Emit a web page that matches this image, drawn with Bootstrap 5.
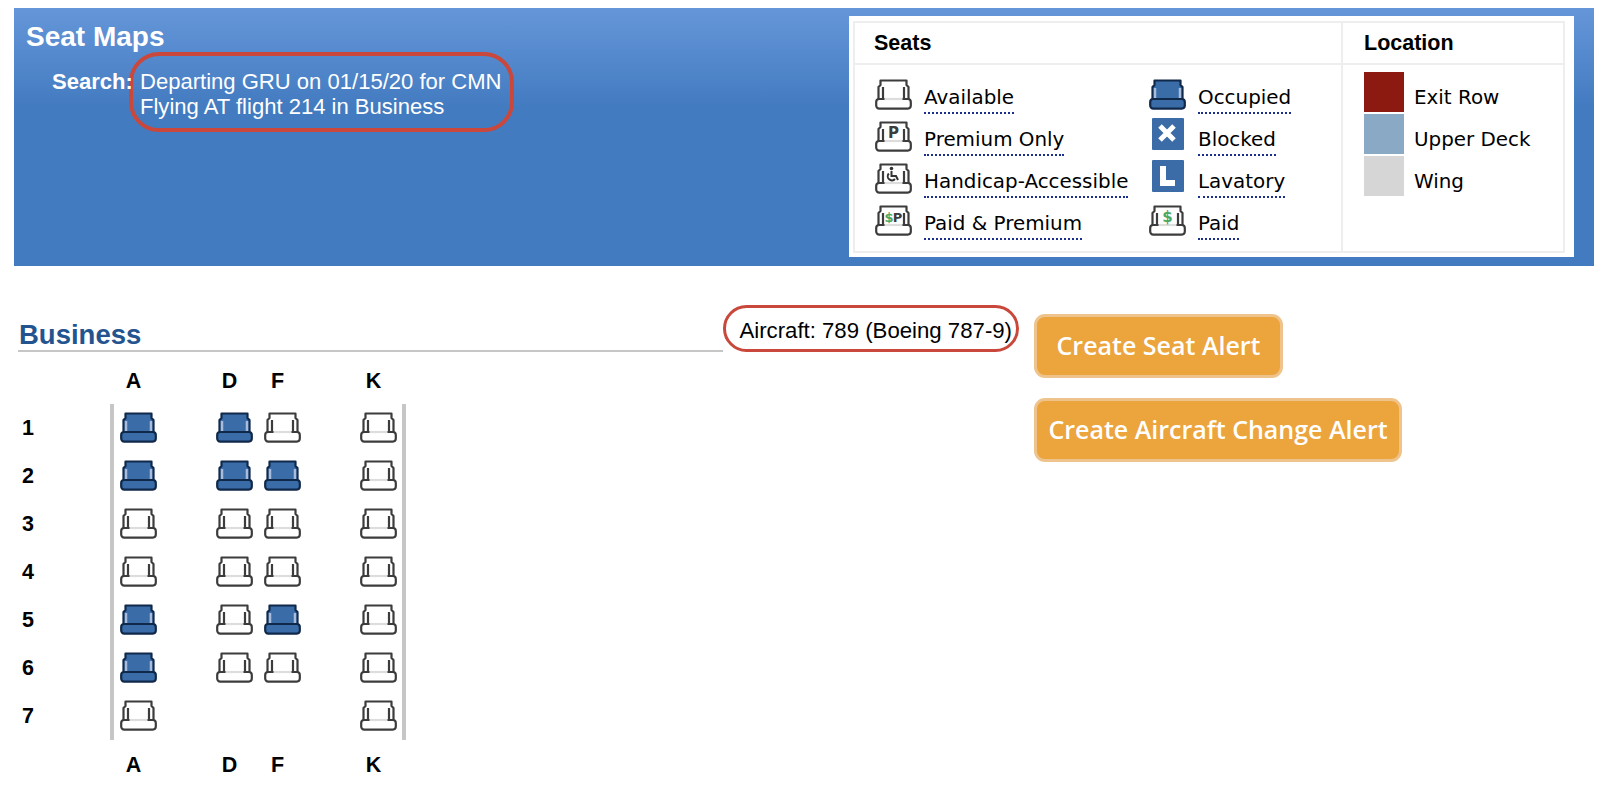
<!DOCTYPE html>
<html lang="en">
<head>
  <meta charset="UTF-8">
  <title>Seat Maps</title>
  <link href="https://cdn.jsdelivr.net/npm/bootstrap@5.3.3/dist/css/bootstrap.min.css" rel="stylesheet">
  <style>
    body { font-family: "Liberation Sans", Arial, sans-serif; color: #000; background: #fff; overflow: hidden; }
    .page-wrap { padding: 8px 10px 0 14px; }

    /* blue header */
    .seat-header { height: 258px; background: linear-gradient(#6596d9 0, #437bc0 100px); color: #fff; }
    .header-title { margin: 13px 0 0 12px; font-size: 28px; line-height: 32px; font-weight: 700; }
    .search-row { margin: -1px 0 0 38px; font-size: 22.05px; line-height: 24.5px; }
    .search-label { position: relative; z-index: 1; width: 77px; padding-top: 18px; font-weight: 700; white-space: nowrap; }
    .note-ring { border: 4px solid #c9483b; }
    .search-ring { border-radius: 30px; padding: 14px 8px 9px 7px; white-space: nowrap; }

    /* legend panel */
    .legend-panel { width: 725px; height: 241px; margin: 8px 20px 0 0; padding: 5px 9px 4px 4px; background: #fff; color: #000; }
    .legend-box { height: 100%; border: 2px solid #eee; }
    .legend-seats { width: 488px; border-right: 2px solid #eee; }
    .legend-head { height: 42px; padding-left: 19px; border-bottom: 2px solid #eee; font-size: 21.5px; line-height: 40px; font-weight: 700; }
    .location-col .legend-head { padding-left: 21px; }
    .legend-body { padding: 7px 0 0 20px; }
    .location-col .legend-body { padding-left: 21px; }
    .legend-col { width: 274px; }
    .legend-row { height: 42px; }
    .legend-row svg { display: block; flex: none; margin-right: 12px; margin-bottom: 4px; }
    .legend-row svg.square-icon { margin-bottom: 6px; }
    .legend-label { font-family: "DejaVu Sans", Verdana, sans-serif; font-size: 19.9px; line-height: 26px; padding-bottom: 1px; border-bottom: 2px dotted #1b2f8f; white-space: nowrap; }
    .legend-plain { border-bottom-color: transparent; }
    .swatch { width: 40px; height: 40px; margin: 0 10px 2px 0; flex: none; }
    .swatch-exit { background: #8c1a10; }
    .swatch-upper { background: #8aa9c4; }
    .swatch-wing { background: #d6d6d6; }

    /* cabin */
    .cabin-wrap { margin: 39px 0 0 4px; }
    .cabin-col { width: 1001px; }
    .cabin-title { margin: 0; padding: 0 0 0 1px; font-size: 27.5px; line-height: 30px; font-weight: 700; color: #24548f; border-bottom: 2px solid #c6c6c6; }
    .aircraft-ring { height: 47px; padding: 6px 4px 0 13px; border-width: 3px; border-radius: 24px; font-size: 22.2px; line-height: 34px; white-space: nowrap; }
    .seat-row { height: 48px; }
    .row-num { width: 92px; padding-left: 4px; font-size: 21.5px; font-weight: 700; line-height: 48px; }
    .seat-body { width: 296px; padding: 8px 0 0 6px; border: solid #c6c6c6; border-width: 0 4px; }
    .seat-slot { width: 37px; height: 31px; flex: none; }
    .seat-slot svg { display: block; }
    .gap-aisle { margin-left: 59px; }
    .gap-pair { margin-left: 11px; }
    .col-labels { margin-left: 92px; padding-left: 10px; font-size: 21.5px; font-weight: 700; line-height: 32px; }
    .col-labels .seat-slot { padding-right: 10px; text-align: center; }
    .labels-top { margin-top: 13px; margin-bottom: 8px; }
    .labels-bottom { margin-top: 9px; }

    /* alert buttons */
    .alert-col { margin: 9px 0 0 15px; gap: 20px; }
    .alert-btn { height: 64px; padding: 0; background: #eca43c; border: 3px solid #eec48c; border-radius: 11px; color: #fff; font-family: "Open Sans", sans-serif; font-size: 25px; font-weight: 600; white-space: nowrap; }
    .alert-btn:hover { background: #eca43c; border-color: #eec48c; color: #fff; }
    .alert-seat { width: 249px; }
    .alert-change { width: 368px; }
  </style>
</head>
<body>
  <svg width="0" height="0" class="position-absolute">
    <defs>
      <symbol id="seat-open" viewBox="0 0 37 31">
        <path d="M5.5 1.5H31.5V6L33.5 8V20H3.5V8L5.5 6Z" fill="#fff" stroke="#3c3c3c" stroke-width="2.2" stroke-linejoin="round"/>
        <path d="M8 8V20M29 8V20" stroke="#3c3c3c" stroke-width="2.2" fill="none"/>
        <rect x="1.2" y="20" width="34.6" height="9.6" rx="3" fill="#fff" stroke="#3c3c3c" stroke-width="2.2"/>
        <path d="M9.5 20H27.5" stroke="#ddd" stroke-width="2.2"/>
      </symbol>
      <symbol id="seat-taken" viewBox="0 0 37 31">
        <path d="M5.5 1.5H31.5V6L33.5 8V20H3.5V8L5.5 6Z" fill="#3a6ca8" stroke="#10284a" stroke-width="2.2" stroke-linejoin="round"/>
        <path d="M6 9V19M31 9V19" stroke="#a9bcdc" stroke-width="2.5" fill="none"/>
        <rect x="1.2" y="20" width="34.6" height="9.6" rx="3" fill="#3a6ca8" stroke="#10284a" stroke-width="2.2"/>
      </symbol>
    </defs>
  </svg>

  <div class="page-wrap">
    <div class="seat-header d-flex justify-content-between">
      <div>
        <div class="header-title">Seat Maps</div>
        <div class="search-row d-flex">
          <div class="search-label">Search:</div>
          <div class="note-ring search-ring">Departing GRU on 01/15/20 for CMN<br>Flying AT flight 214 in Business</div>
        </div>
      </div>

      <div class="legend-panel">
        <div class="legend-box d-flex">
          <div class="legend-seats">
            <div class="legend-head">Seats</div>
            <div class="legend-body d-flex">
              <div class="legend-col">
                <div class="legend-row d-flex align-items-end">
                  <svg width="37" height="31"><use href="#seat-open"/></svg>
                  <span class="legend-label">Available</span>
                </div>
                <div class="legend-row d-flex align-items-end">
                  <svg width="37" height="31" viewBox="0 0 37 31"><use href="#seat-open" width="37" height="31"/><text x="18.5" y="17" text-anchor="middle" font-family="DejaVu Sans" font-size="15" font-weight="700" fill="#3c3c3c">P</text></svg>
                  <span class="legend-label">Premium Only</span>
                </div>
                <div class="legend-row d-flex align-items-end">
                  <svg width="37" height="31" viewBox="0 0 37 31"><use href="#seat-open" width="37" height="31"/><circle cx="16.5" cy="5.5" r="1.8" fill="#333"/><path d="M16.5 8V13H21L23 17M13.8 10.5A4 4 0 1 0 20 16" fill="none" stroke="#333" stroke-width="2"/></svg>
                  <span class="legend-label">Handicap-Accessible</span>
                </div>
                <div class="legend-row d-flex align-items-end">
                  <svg width="37" height="31" viewBox="0 0 37 31"><use href="#seat-open" width="37" height="31"/><text x="14" y="16.5" text-anchor="middle" font-family="DejaVu Sans" font-size="13" font-weight="700" fill="#4aa860">$</text><text x="22.5" y="16.5" text-anchor="middle" font-family="DejaVu Sans" font-size="13" font-weight="700" fill="#3c3c3c">P</text></svg>
                  <span class="legend-label">Paid &amp; Premium</span>
                </div>
              </div>
              <div>
                <div class="legend-row d-flex align-items-end">
                  <svg width="37" height="31"><use href="#seat-taken"/></svg>
                  <span class="legend-label">Occupied</span>
                </div>
                <div class="legend-row d-flex align-items-end">
                  <svg class="square-icon" width="37" height="32" viewBox="0 0 37 32"><rect x="3" width="32" height="32" rx="1" fill="#3b6ca8"/><path d="M11 8L25 22M25 8L11 22" stroke="#fff" stroke-width="5"/></svg>
                  <span class="legend-label">Blocked</span>
                </div>
                <div class="legend-row d-flex align-items-end">
                  <svg class="square-icon" width="37" height="32" viewBox="0 0 37 32"><rect x="3" width="32" height="32" rx="1" fill="#3b6ca8"/><path d="M11 6H17V20H26V26H11Z" fill="#fff"/></svg>
                  <span class="legend-label">Lavatory</span>
                </div>
                <div class="legend-row d-flex align-items-end">
                  <svg width="37" height="31" viewBox="0 0 37 31"><use href="#seat-open" width="37" height="31"/><text x="18.5" y="16.5" text-anchor="middle" font-family="DejaVu Sans" font-size="15" font-weight="700" fill="#4aa860">$</text></svg>
                  <span class="legend-label">Paid</span>
                </div>
              </div>
            </div>
          </div>
          <div class="location-col flex-grow-1">
            <div class="legend-head">Location</div>
            <div class="legend-body">
              <div class="legend-row d-flex align-items-end"><div class="swatch swatch-exit"></div><span class="legend-label legend-plain">Exit Row</span></div>
              <div class="legend-row d-flex align-items-end"><div class="swatch swatch-upper"></div><span class="legend-label legend-plain">Upper Deck</span></div>
              <div class="legend-row d-flex align-items-end"><div class="swatch swatch-wing"></div><span class="legend-label legend-plain">Wing</span></div>
            </div>
          </div>
        </div>
      </div>
    </div>

    <div class="cabin-wrap d-flex">
      <div class="cabin-col">
        <div class="d-flex align-items-end">
          <h2 class="cabin-title flex-grow-1">Business</h2>
          <div class="note-ring aircraft-ring">Aircraft: 789 (Boeing 787-9)</div>
        </div>
        <div id="seat-map"></div>
      </div>
      <div class="alert-col d-flex flex-column align-items-start">
        <button class="btn alert-btn alert-seat">Create Seat Alert</button>
        <button class="btn alert-btn alert-change">Create Aircraft Change Alert</button>
      </div>
    </div>
  </div>

  <script>
    // o = occupied, a = available, - = no seat (columns A D F K)
    const rows = ['ooaa', 'oooa', 'aaaa', 'aaaa', 'oaoa', 'oaaa', 'a--a'];
    const letters = ['A', 'D', 'F', 'K'];
    const gaps = ['', 'gap-aisle', 'gap-pair', 'gap-aisle'];

    function labelRow(extra) {
      const cells = letters.map((l, i) => `<div class="seat-slot ${gaps[i]}">${l}</div>`).join('');
      return `<div class="col-labels d-flex ${extra}">${cells}</div>`;
    }

    function seatRow(seats, n) {
      const cells = [...seats].map((s, i) => {
        const icon = s === '-' ? '' : `<svg width="37" height="31"><use href="#seat-${s === 'o' ? 'taken' : 'open'}"/></svg>`;
        return `<div class="seat-slot ${gaps[i]}">${icon}</div>`;
      }).join('');
      return `<div class="seat-row d-flex"><div class="row-num">${n}</div><div class="seat-body d-flex">${cells}</div></div>`;
    }

    document.getElementById('seat-map').innerHTML =
      labelRow('labels-top') + rows.map((r, i) => seatRow(r, i + 1)).join('') + labelRow('labels-bottom');
  </script>
  <script src="https://cdn.jsdelivr.net/npm/bootstrap@5.3.3/dist/js/bootstrap.bundle.min.js"></script>
</body>
</html>
